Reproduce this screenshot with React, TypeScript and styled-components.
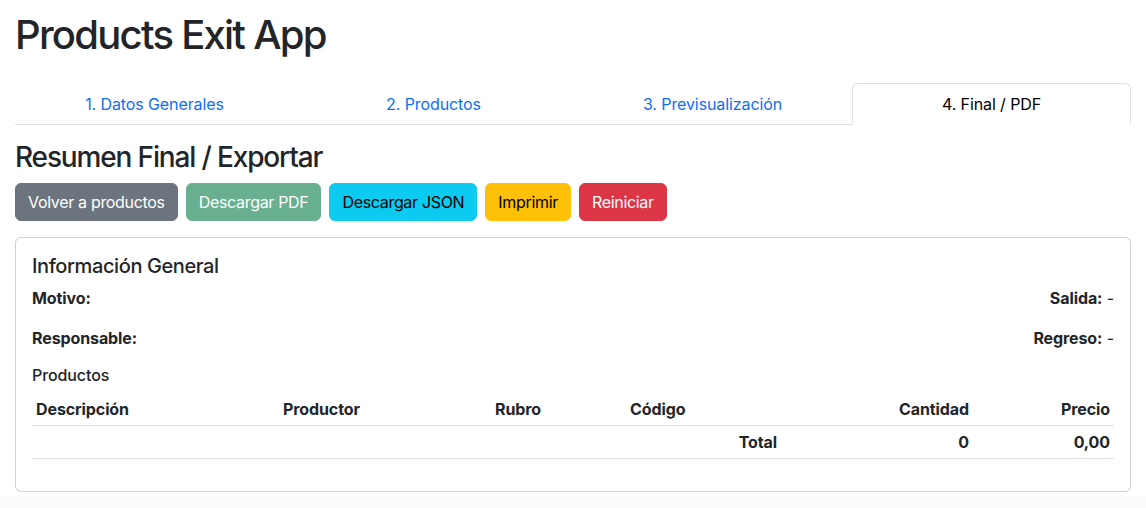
import React from "react";
import styled, { createGlobalStyle, css } from "styled-components";

const GlobalStyle = createGlobalStyle`
  *, *::before, *::after { box-sizing: border-box; }
  html, body { margin: 0; padding: 0; background: #fff; }
  body {
    font-family: Inter, "Noto Sans", "Liberation Sans", sans-serif;
    font-size: 16px;
    line-height: 1.5;
    color: #212529;
  }
`;

const Page = styled.div`
  padding: 11px 15px 0;
  display: flex;
  flex-direction: column;
`;

const Title = styled.h1`
  margin: 0 0 24px;
  font-size: 40px;
  font-weight: 500;
  line-height: 1.2;
  letter-spacing: -1.75px;
`;

const Tabs = styled.ul`
  display: flex;
  list-style: none;
  margin: 0;
  padding: 0;
  border-bottom: 1px solid #dee2e6;
`;

const TabItem = styled.li`
  flex: 1 1 0;
  margin-bottom: -1px;
`;

const TabLink = styled.a<{ $active?: boolean }>`
  display: block;
  text-align: center;
  padding: 8px 16px;
  font-size: 16px;
  line-height: 24px;
  text-decoration: none;
  color: #0d6efd;
  border: 1px solid transparent;
  border-top-left-radius: 6px;
  border-top-right-radius: 6px;
  letter-spacing: -0.1px;
  ${(p) =>
    p.$active &&
    css`
      color: #000;
      background: #fff;
      border-color: #dee2e6 #dee2e6 #fff;
    `}
`;

const SectionTitle = styled.h3`
  margin: 16px 0 8px;
  font-size: 28px;
  font-weight: 500;
  line-height: 1.2;
  letter-spacing: -1.15px;
`;

const Toolbar = styled.div`
  display: flex;
  gap: 8px;
`;

type Variant = "secondary" | "success" | "info" | "warning" | "danger";

const variants: Record<Variant, { bg: string; fg: string; dim?: boolean }> = {
  secondary: { bg: "#6c757d", fg: "#fff" },
  success: { bg: "#198754", fg: "#fff", dim: true },
  info: { bg: "#0dcaf0", fg: "#000" },
  warning: { bg: "#ffc107", fg: "#000" },
  danger: { bg: "#dc3545", fg: "#fff" },
};

const Button = styled.button<{ $variant: Variant }>`
  font-family: inherit;
  font-size: 16px;
  line-height: 24px;
  padding: 6px 12px;
  border-radius: 6px;
  border: 1px solid ${(p) => variants[p.$variant].bg};
  background: ${(p) => variants[p.$variant].bg};
  color: ${(p) => variants[p.$variant].fg};
  opacity: ${(p) => (variants[p.$variant].dim ? 0.65 : 1)};
  letter-spacing: -0.32px;
  cursor: pointer;
`;

const Card = styled.section`
  margin-top: 16px;
  border: 1px solid rgba(0, 0, 0, 0.175);
  border-radius: 6px;
  padding: 16px;
  background: #fff;
`;

const CardTitle = styled.h5`
  margin: 0 0 8px;
  font-size: 20px;
  font-weight: 500;
  line-height: 24px;
  letter-spacing: -0.4px;
`;

const InfoGrid = styled.div`
  display: grid;
  grid-template-columns: 1fr 1fr;
`;

const InfoItem = styled.p<{ $end?: boolean }>`
  margin: 0 0 16px;
  line-height: 24px;
  text-align: ${(p) => (p.$end ? "right" : "left")};
  letter-spacing: -0.1px;
`;

const Label = styled.strong`
  font-weight: 700;
`;

const SubTitle = styled.h6`
  margin: 0 0 8px;
  font-size: 16px;
  font-weight: 500;
  line-height: 1.2;
  letter-spacing: -0.1px;
`;

const Table = styled.table`
  width: 100%;
  border-collapse: collapse;
  margin-bottom: 16px;
  table-layout: fixed;
`;

const Cell = styled.td<{ $end?: boolean }>`
  padding: 4px;
  line-height: 24px;
  font-weight: 700;
  text-align: ${(p) => (p.$end ? "right" : "left")};
  border-bottom: 1px solid #dee2e6;
  letter-spacing: -0.1px;
`;

const Footer = styled.div`
  margin-top: 4px;
  height: 20px;
  background: #fbfbfb;
  margin-left: -15px;
  margin-right: -15px;
`;

const columns = [
  { label: "Descripción", width: 247 },
  { label: "Productor", width: 212 },
  { label: "Rubro", width: 135 },
  { label: "Código", width: 155 },
  { label: "Cantidad", width: 192, end: true },
  { label: "Precio", width: 141, end: true },
];

export default function App() {
  return (
    <>
      <GlobalStyle />
      <Page>
        <Title>Products Exit App</Title>
        <Tabs>
          <TabItem><TabLink href="#">1. Datos Generales</TabLink></TabItem>
          <TabItem><TabLink href="#">2. Productos</TabLink></TabItem>
          <TabItem><TabLink href="#">3. Previsualización</TabLink></TabItem>
          <TabItem><TabLink $active href="#">4. Final / PDF</TabLink></TabItem>
        </Tabs>
        <SectionTitle>Resumen Final / Exportar</SectionTitle>
        <Toolbar>
          <Button $variant="secondary">Volver a productos</Button>
          <Button $variant="success">Descargar PDF</Button>
          <Button $variant="info">Descargar JSON</Button>
          <Button $variant="warning">Imprimir</Button>
          <Button $variant="danger">Reiniciar</Button>
        </Toolbar>
        <Card>
          <CardTitle>Información General</CardTitle>
          <InfoGrid>
            <InfoItem><Label>Motivo:</Label></InfoItem>
            <InfoItem $end><Label>Salida:</Label> -</InfoItem>
            <InfoItem><Label>Responsable:</Label></InfoItem>
            <InfoItem $end><Label>Regreso:</Label> -</InfoItem>
          </InfoGrid>
          <SubTitle>Productos</SubTitle>
          <Table>
            <colgroup>
              {columns.map((c) => (
                <col key={c.label} style={{ width: c.width }} />
              ))}
            </colgroup>
            <thead>
              <tr>
                {columns.map((c) => (
                  <Cell as="th" key={c.label} $end={c.end}>{c.label}</Cell>
                ))}
              </tr>
            </thead>
            <tbody />
            <tfoot>
              <tr>
                <Cell colSpan={4} $end>Total</Cell>
                <Cell $end>0</Cell>
                <Cell $end>0,00</Cell>
              </tr>
            </tfoot>
          </Table>
        </Card>
        <Footer />
      </Page>
    </>
  );
}
